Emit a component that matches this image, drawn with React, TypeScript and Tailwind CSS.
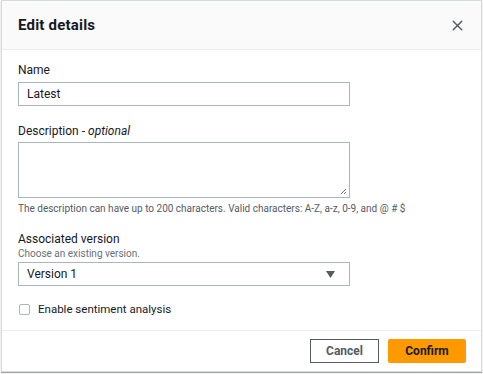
import { X } from 'lucide-react';

const App = () => {
  return (
    <div className="w-[483px] h-[374px] bg-white" style={{ fontFamily: 'Roboto, "Open Sans", sans-serif' }}>
      <div className="ml-px w-[481px] h-[372px] border border-[#d5dbdb] shadow-[0_1px_1px_rgba(0,0,0,0.35)] flex flex-col bg-white">
        {/* Header */}
        <div className="h-[49px] bg-[#fafafa] border-b border-[#eaeded] flex items-center justify-between pl-[16px] pr-[15px]">
          <h1 className="text-[15px] font-bold text-[#16191f] tracking-[0.2px]">Edit details</h1>
          <X className="w-[17px] h-[17px] text-[#545b64]" strokeWidth={2} />
        </div>

        {/* Body */}
        <div className="flex-1 px-[16px] pt-[12px] text-[#16191f]">
          <label className="block text-[12px] leading-[16px]">Name</label>
          <div className="mt-[4px] w-[332px] h-[24px] border border-[#aab7b8] flex items-center px-[8px] text-[12px]">
            Latest
          </div>

          <label className="block mt-[17px] text-[12px] leading-[16px]">
            Description - <i>optional</i>
          </label>
          <div className="relative mt-[3px] w-[332px] h-[56px] border border-[#aab7b8]">
            <svg className="absolute right-[2px] bottom-[2px]" width="7" height="7" viewBox="0 0 7 7">
              <path d="M6 1L1 6M6 4L4 6" stroke="#545b64" strokeWidth="0.8" />
            </svg>
          </div>
          <p className="mt-[4px] text-[10px] leading-[14px] text-[#545b64]">
            The description can have up to 200 characters. Valid characters: A-Z, a-z, 0-9, and @ # $
          </p>

          <label className="block mt-[15px] text-[12px] leading-[16px]">Associated version</label>
          <p className="text-[10px] leading-[13px] text-[#687078]">Choose an existing version.</p>
          <div className="mt-[2px] w-[332px] h-[24px] border border-[#aab7b8] flex items-center justify-between px-[8px] text-[12px]">
            <span>Version 1</span>
            <svg width="9" height="7" viewBox="0 0 9 7" className="mr-[6px]">
              <path d="M0 0H9L4.5 7Z" fill="#545b64" />
            </svg>
          </div>

          <div className="mt-[15px] flex items-center gap-[8px]">
            <div className="ml-px w-[11px] h-[11px] border border-[#aab7b8] rounded-[2px]" />
            <span className="text-[11.5px] text-[#16191f]">Enable sentiment analysis</span>
          </div>
        </div>

        {/* Footer */}
        <div className="h-[41px] border-t border-[#eaeded] flex items-center justify-end gap-[9px] pr-[15px]">
          <button className="w-[69px] h-[24px] border border-[#545b64] text-[12px] font-bold text-[#545b64] bg-white">
            Cancel
          </button>
          <button className="w-[78px] h-[24px] bg-[#ff9900] rounded-[2px] text-[12px] font-bold text-[#16191f]">
            Confirm
          </button>
        </div>
      </div>
    </div>
  );
};

export default App;
